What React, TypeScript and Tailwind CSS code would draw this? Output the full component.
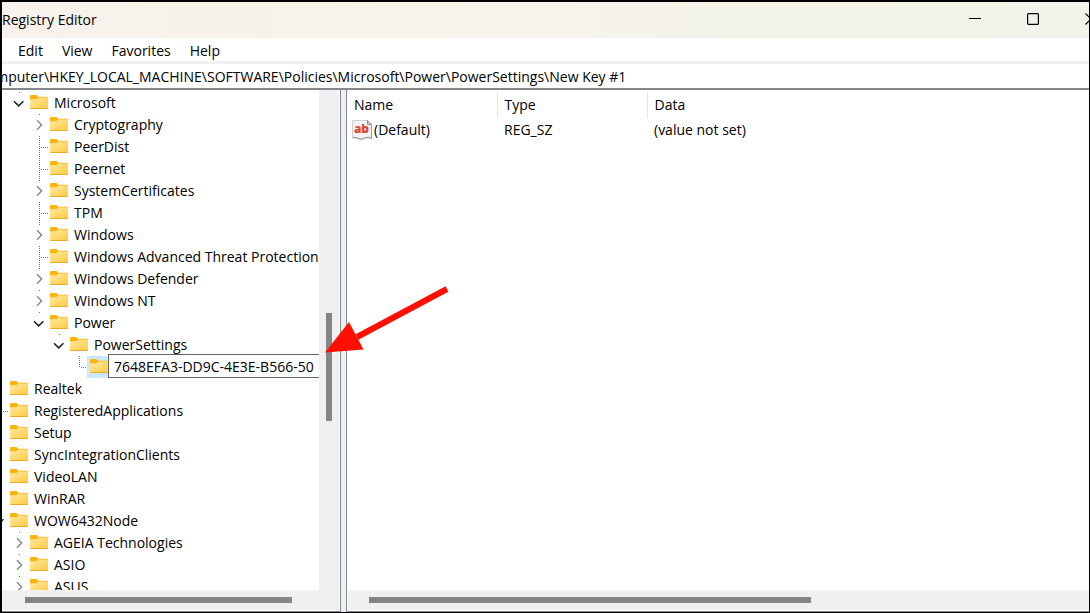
import React from 'react';

type Node = {
  label: string;
  depth: number;
  state?: 'open' | 'closed';
  editing?: boolean;
  noBranch?: boolean;
};

const treeData: Node[] = [
  { label: 'Microsoft', depth: 1, state: 'open' },
  { label: 'Cryptography', depth: 2, state: 'closed' },
  { label: 'PeerDist', depth: 2 },
  { label: 'Peernet', depth: 2 },
  { label: 'SystemCertificates', depth: 2, state: 'closed' },
  { label: 'TPM', depth: 2 },
  { label: 'Windows', depth: 2, state: 'closed' },
  { label: 'Windows Advanced Threat Protection', depth: 2 },
  { label: 'Windows Defender', depth: 2, state: 'closed' },
  { label: 'Windows NT', depth: 2, state: 'closed' },
  { label: 'Power', depth: 2, state: 'open' },
  { label: 'PowerSettings', depth: 3, state: 'open' },
  { label: '7648EFA3-DD9C-4E3E-B566-50', depth: 4, editing: true },
  { label: 'Realtek', depth: 0, noBranch: true },
  { label: 'RegisteredApplications', depth: 0 },
  { label: 'Setup', depth: 0, noBranch: true },
  { label: 'SyncIntegrationClients', depth: 0, noBranch: true },
  { label: 'VideoLAN', depth: 0, noBranch: true },
  { label: 'WinRAR', depth: 0, noBranch: true },
  { label: 'WOW6432Node', depth: 0, state: 'open' },
  { label: 'AGEIA Technologies', depth: 1, state: 'closed' },
  { label: 'ASIO', depth: 1, state: 'closed' },
  { label: 'ASUS', depth: 1, state: 'closed' },
];

// Left margin of a row for each depth, the gutter of depth 0 is scrolled out
const indents = ['-ml-[14px]', 'ml-[6px]', 'ml-[26px]', 'ml-[46px]', 'ml-[66px]'];

const menus = ['Edit', 'View', 'Favorites', 'Help'];

const FolderIcon: React.FC = () => (
  <svg width="18" height="14" viewBox="0 0 18 14" className="mb-[2px] shrink-0">
    <defs>
      <linearGradient id="folder" x1="0" y1="0" x2="1" y2="1">
        <stop offset="0" stopColor="#ffe9a6" />
        <stop offset="1" stopColor="#ffcb3d" />
      </linearGradient>
    </defs>
    <path d="M0 1q0-1 1-1h5.500l1.700 1.700H17q1 0 1 1V6H0z" fill="#f9b50f" />
    <path d="M0 4.200h6.300l1.900-1.700H18V13q0 1-1 1H1q-1 0-1-1z" fill="url(#folder)" />
    <path d="M0 13h18q0 1-1 1H1q-1 0-1-1z" fill="#e9ad2c" />
  </svg>
);

// Chevron or dotted branch line in front of a key
const Gutter: React.FC<{ node: Node }> = ({ node }) => (
  <svg width="22" height="22" viewBox="0 0 22 22" fill="none" className="shrink-0">
    {node.state && node.depth > 0 && <path d="M11 0h1v1h-1z" fill="#777" />}
    {node.state === 'open' && <path d="M6 9.200l4.700 4.600 4.700-4.600" stroke="#222" strokeWidth="1.6" />}
    {node.state === 'closed' && <path d="M9 6.300l4.600 4.700L9 15.700" stroke="#8a8a8a" strokeWidth="1.5" />}
    {!node.state && !node.noBranch && (
      <g stroke="#777" strokeDasharray="1 1">
        <path d={node.editing ? 'M11.5 0v12' : 'M11.5 0v22'} />
        <path d="M13 11.5h7" />
      </g>
    )}
  </svg>
);

const TreeRow: React.FC<{ node: Node }> = ({ node }) => (
  <li className={`flex h-[22px] items-center ${indents[node.depth]}`}>
    <Gutter node={node} />
    {node.editing ? (
      <>
        <span className="-ml-[3px] flex h-[22px] w-[21px] shrink-0 items-center bg-[#cce8ff] pl-[3px]">
          <FolderIcon />
        </span>
        <input
          aria-label="Key name"
          defaultValue={node.label}
          className="mb-[2px] h-[24px] w-[240px] shrink-0 border border-[#646464] bg-white pl-[5px] outline-none"
        />
      </>
    ) : (
      <>
        <FolderIcon />
        <span className="ml-[6px] whitespace-nowrap">{node.label}</span>
      </>
    )}
  </li>
);

const StringIcon: React.FC = () => (
  <svg width="20" height="20" viewBox="0 0 20 20" className="shrink-0">
    <path d="M.5.5h15l4 4v14l-3-.8-3 .2-3 1.200-3.500-.2-3-1.200-3.500.3z" fill="#f3f3f5" stroke="#cfcfd2" />
    <path d="M15.500.5v4h4z" fill="#d8d8da" stroke="#8c8c90" />
    <path d="M19.500 4.500v14" stroke="#a0a0a4" />
    <path d="M.5 17.800l3.500-.3 3 1.400 3.500.2 3-1.400 3-.2 3 .8" fill="none" stroke="#8c8c90" />
    <text x="9.5" y="13" textAnchor="middle" fontSize="12" fontWeight="800" fill="#dc4a26" fontFamily="Open Sans, sans-serif">
      ab
    </text>
  </svg>
);

const App: React.FC = () => {
  return (
    <div className="relative flex h-screen flex-col overflow-hidden border-t-2 border-r border-b border-l-2 border-black bg-white font-['Open_Sans',sans-serif] text-[14px] leading-[22px] text-black">
      <header className="flex h-[36px] shrink-0 items-center justify-between bg-linear-to-r from-[#f7f2eb] to-[#f2f3ea]">
        <h1>Registry Editor</h1>
        <div className="flex h-full w-[143px] overflow-hidden">
          <button aria-label="Minimize" className="flex w-[58px] shrink-0 items-center justify-center">
            <svg width="12" height="12" viewBox="0 0 12 12">
              <path d="M0 4h12v1H0z" />
            </svg>
          </button>
          <button aria-label="Maximize" className="flex w-[58px] shrink-0 items-center justify-center">
            <svg width="12" height="14" viewBox="0 0 12 14" fill="none" stroke="#000">
              <rect x=".6" y=".6" width="10.8" height="10.8" rx="1" strokeWidth="1.2" />
            </svg>
          </button>
          <button aria-label="Close" className="flex w-[58px] shrink-0 items-center justify-center">
            <svg width="12" height="14" viewBox="0 0 12 14" stroke="#000" strokeWidth="1.2">
              <path d="M.5.5l11 11M11.5.5l-11 11" />
            </svg>
          </button>
        </div>
      </header>

      <nav className="flex h-[26px] shrink-0 items-center gap-[19px] border-b-[3px] border-[#f0f0f0] pt-[2px] pl-4">
        {menus.map((menu) => (
          <button key={menu}>{menu}</button>
        ))}
      </nav>

      <input
        aria-label="Address"
        defaultValue="Computer\HKEY_LOCAL_MACHINE\SOFTWARE\Policies\Microsoft\Power\PowerSettings\New Key #1"
        className="h-[26px] w-full shrink-0 border-b-2 border-[#828790] indent-[-24px] outline-none"
      />

      <main className="flex min-h-0 flex-1">
        {/* Key tree */}
        <section className="flex w-[339px] shrink-0 flex-col border-r border-b border-[#828790]">
          <div className="flex min-h-0 flex-1">
            <ul className="min-w-0 flex-1 overflow-hidden pt-[2px]">
              {treeData.map((node) => (
                <TreeRow key={node.label} node={node} />
              ))}
            </ul>
            <div className="mr-px w-[20px] bg-[#f0f0f0] pt-[223px]">
              <div className="ml-[7px] h-[108px] w-[6px] bg-[#858585]" />
            </div>
          </div>
          <div className="mr-px mb-px h-[20px] shrink-0 bg-[#f0f0f0] pt-[7px] pl-[23px]">
            <div className="h-[6px] w-[267px] bg-[#858585]" />
          </div>
        </section>

        <div className="w-[5px] shrink-0 bg-[#f0f0f0]" />

        {/* Values of the selected key */}
        <section className="flex min-w-0 flex-1 flex-col border-b border-l border-[#828790]">
          <div className="min-h-0 flex-1 overflow-hidden pt-[2px]">
            <table className="w-full table-fixed border-collapse text-left">
              <thead>
                <tr className="h-[26px]">
                  <th className="w-[150px] border-r border-[#e5e5e5] pl-[7px] font-normal">Name</th>
                  <th className="w-[150px] border-r border-[#e5e5e5] pl-[7px] font-normal">Type</th>
                  <th className="pl-[7px] font-normal">Data</th>
                </tr>
              </thead>
              <tbody>
                <tr className="h-[24px]">
                  <td className="pl-[5px]">
                    <span className="flex items-center gap-[2px]">
                      <StringIcon />
                      (Default)
                    </span>
                  </td>
                  <td className="pl-[7px]">REG_SZ</td>
                  <td className="pl-[7px]">(value not set)</td>
                </tr>
              </tbody>
            </table>
          </div>
          <div className="mb-px ml-px h-[20px] shrink-0 bg-[#f0f0f0] pt-[7px] pl-[21px]">
            <div className="h-[6px] w-[442px] bg-[#858585]" />
          </div>
        </section>
      </main>

      {/* Arrow pointing at the new key */}
      <svg width="126" height="70" viewBox="0 0 126 70" className="pointer-events-none absolute top-[284px] left-[322px]">
        <path d="M123 3L33 51" stroke="#ff0f00" strokeWidth="6" />
        <path d="M1 66.500L25 36L39.500 63.500z" fill="#ff0f00" />
      </svg>
    </div>
  );
};

export default App;
